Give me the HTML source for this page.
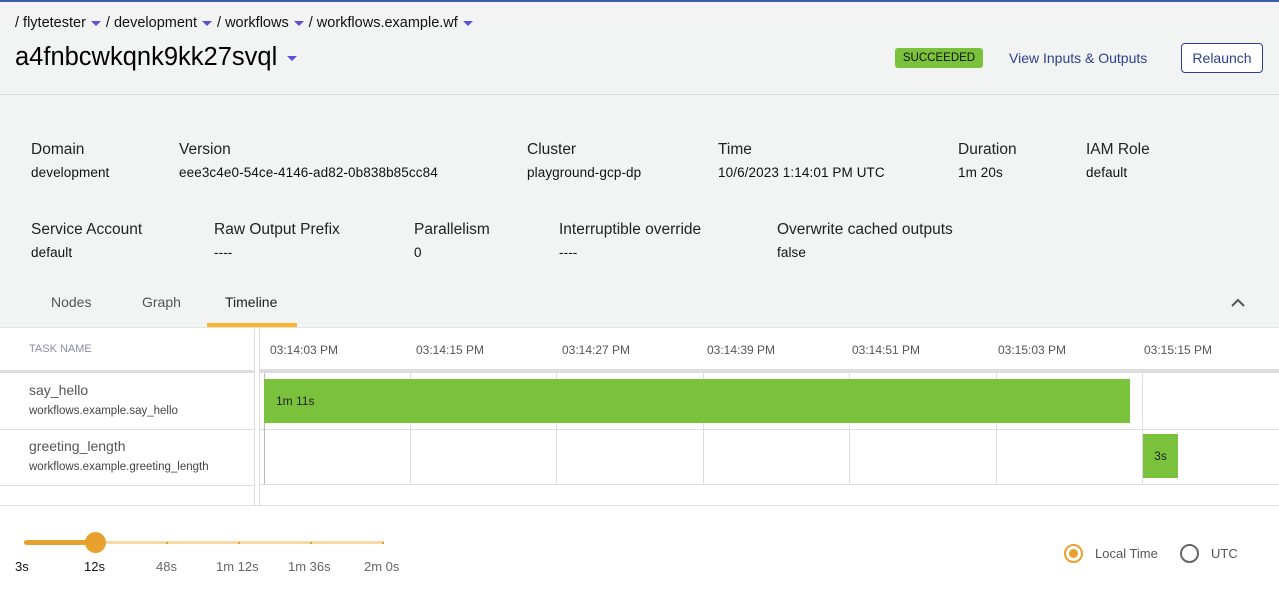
<!DOCTYPE html>
<html><head><meta charset="utf-8"><style>
*{margin:0;padding:0;box-sizing:border-box}
body{width:1279px;height:599px;overflow:hidden;background:#fff;font-family:"Liberation Sans",sans-serif;position:relative;color:#000}
.a{position:absolute;white-space:nowrap}
.tri{display:inline-block;width:0;height:0;border-left:5px solid transparent;border-right:5px solid transparent;border-top:5px solid #5a4fd8;vertical-align:middle;margin:0 5px 0 5px}
.lab{font-size:15.5px;color:#222}
.val{font-size:13.5px;color:#111;letter-spacing:.1px}
.tick{font-size:12px;color:#555}
.vl{position:absolute;width:1px;background:#ddd}
.hl{position:absolute;height:1px;background:#ddd}
</style></head><body>
<div class="a" style="left:0;top:0;width:1279px;height:327px;background:#f2f3f3"></div>
<div class="a" style="left:0;top:0;width:1279px;height:2px;background:#3a5fa6"></div>
<div class="hl" style="left:0;top:94px;width:1279px;background:#dcdcdc"></div>

<div class="a" style="left:15px;top:15px;font-size:14.5px;color:#111">/ flytetester<span class="tri"></span>/ development<span class="tri"></span>/ workflows<span class="tri"></span>/ workflows.example.wf<span class="tri"></span></div>
<div class="a" style="left:15px;top:43px;font-size:25.5px;color:#000">a4fnbcwkqnk9kk27svql<span class="tri" style="margin-left:10px"></span></div>

<div class="a" style="left:895px;top:48px;width:88px;height:20px;background:#7ac23b;border-radius:3px;font-size:11.5px;line-height:20px;text-align:center;color:#111">SUCCEEDED</div>
<div class="a" style="left:1009px;top:50px;font-size:14px;color:#2f3f8f">View Inputs &amp; Outputs</div>
<div class="a" style="left:1181px;top:43px;width:82px;height:30px;border:1px solid #2f3f8f;border-radius:4px;background:#fff;font-size:14px;line-height:28px;text-align:center;color:#2f3f8f">Relaunch</div>

<div class="a lab" style="left:31px;top:141px">Domain</div><div class="a val" style="left:31px;top:165px">development</div>
<div class="a lab" style="left:179px;top:141px">Version</div><div class="a val" style="left:179px;top:165px">eee3c4e0-54ce-4146-ad82-0b838b85cc84</div>
<div class="a lab" style="left:527px;top:141px">Cluster</div><div class="a val" style="left:527px;top:165px">playground-gcp-dp</div>
<div class="a lab" style="left:718px;top:141px">Time</div><div class="a val" style="left:718px;top:165px">10/6/2023 1:14:01 PM UTC</div>
<div class="a lab" style="left:958px;top:141px">Duration</div><div class="a val" style="left:958px;top:165px">1m 20s</div>
<div class="a lab" style="left:1086px;top:141px">IAM Role</div><div class="a val" style="left:1086px;top:165px">default</div>

<div class="a lab" style="left:31px;top:221px">Service Account</div><div class="a val" style="left:31px;top:245px">default</div>
<div class="a lab" style="left:214px;top:221px">Raw Output Prefix</div><div class="a val" style="left:214px;top:245px">----</div>
<div class="a lab" style="left:414px;top:221px">Parallelism</div><div class="a val" style="left:414px;top:245px">0</div>
<div class="a lab" style="left:559px;top:221px">Interruptible override</div><div class="a val" style="left:559px;top:245px">----</div>
<div class="a lab" style="left:777px;top:221px">Overwrite cached outputs</div><div class="a val" style="left:777px;top:245px">false</div>

<div class="a" style="left:51px;top:294px;font-size:14px;color:#555">Nodes</div>
<div class="a" style="left:142px;top:294px;font-size:14px;color:#555">Graph</div>
<div class="a" style="left:225px;top:294px;font-size:14px;color:#222">Timeline</div>
<div class="a" style="left:207px;top:323px;width:90px;height:4px;background:#fbb72b"></div>
<svg class="a" style="left:1230px;top:297px" width="16" height="12"><path d="M2 9 L8 3 L14 9" fill="none" stroke="#555" stroke-width="2"/></svg>
<div class="hl" style="left:0;top:327px;width:1279px;background:#e2e2e2"></div>

<div class="vl" style="left:254px;top:327px;height:178px"></div>
<div class="vl" style="left:259px;top:327px;height:178px"></div>
<div class="a" style="left:29px;top:343px;font-size:11px;color:#8a8aa8">TASK NAME</div>
<div class="a" style="left:0;top:370px;width:254px;height:3px;background:#ddd"></div>
<div class="a" style="left:260px;top:369px;width:1019px;height:4px;background:#ddd"></div>
<div class="hl" style="left:0;top:429px;width:254px"></div>
<div class="hl" style="left:0;top:485px;width:254px"></div>
<div class="hl" style="left:260px;top:429px;width:1019px"></div>
<div class="hl" style="left:260px;top:484px;width:1019px"></div>
<div class="hl" style="left:0;top:505px;width:1279px"></div>

<div class="a" style="left:29px;top:382px;font-size:14px;color:#555">say_hello</div>
<div class="a" style="left:29px;top:405px;font-size:11.5px;color:#444">workflows.example.say_hello</div>
<div class="a" style="left:29px;top:438px;font-size:14px;color:#555">greeting_length</div>
<div class="a" style="left:29px;top:461px;font-size:11.5px;color:#444">workflows.example.greeting_length</div>

<div class="vl" style="left:264px;top:373px;height:111px;background:#bbb"></div>
<div class="vl" style="left:410px;top:373px;height:111px"></div>
<div class="vl" style="left:556px;top:373px;height:111px"></div>
<div class="vl" style="left:703px;top:373px;height:111px"></div>
<div class="vl" style="left:849px;top:373px;height:111px"></div>
<div class="vl" style="left:996px;top:373px;height:111px"></div>
<div class="vl" style="left:1142px;top:373px;height:111px"></div>

<div class="a tick" style="left:270px;top:343px">03:14:03 PM</div>
<div class="a tick" style="left:416px;top:343px">03:14:15 PM</div>
<div class="a tick" style="left:562px;top:343px">03:14:27 PM</div>
<div class="a tick" style="left:707px;top:343px">03:14:39 PM</div>
<div class="a tick" style="left:852px;top:343px">03:14:51 PM</div>
<div class="a tick" style="left:998px;top:343px">03:15:03 PM</div>
<div class="a tick" style="left:1144px;top:343px">03:15:15 PM</div>

<div class="a" style="left:264px;top:379px;width:866px;height:44px;background:#7ac23b;font-size:12px;line-height:44px;padding-left:12px;color:#222">1m 11s</div>
<div class="a" style="left:1143px;top:434px;width:35px;height:44px;background:#7ac23b;font-size:12px;line-height:44px;text-align:center;color:#222">3s</div>

<div class="a" style="left:24px;top:541px;width:360px;height:3px;background:#f7d9a6;border-radius:2px"></div>
<div class="a" style="left:24px;top:540px;width:72px;height:5px;background:#e8a12c;border-radius:3px"></div>
<div class="a" style="left:85px;top:532px;width:21px;height:21px;border-radius:50%;background:#e8a12c"></div>
<div class="a" style="left:166px;top:542px;width:2px;height:2px;background:#e8a12c"></div>
<div class="a" style="left:238px;top:542px;width:2px;height:2px;background:#e8a12c"></div>
<div class="a" style="left:310px;top:542px;width:2px;height:2px;background:#e8a12c"></div>
<div class="a" style="left:382px;top:542px;width:2px;height:2px;background:#e8a12c"></div>
<div class="a" style="left:15px;top:559px;font-size:13px;color:#111">3s</div>
<div class="a" style="left:84px;top:559px;font-size:13px;color:#111">12s</div>
<div class="a" style="left:156px;top:559px;font-size:13px;color:#666">48s</div>
<div class="a" style="left:216px;top:559px;font-size:13px;color:#666">1m 12s</div>
<div class="a" style="left:288px;top:559px;font-size:13px;color:#666">1m 36s</div>
<div class="a" style="left:364px;top:559px;font-size:13px;color:#666">2m 0s</div>

<div class="a" style="left:1064px;top:544px;width:19px;height:19px;border-radius:50%;border:2px solid #e8a12c"></div>
<div class="a" style="left:1069px;top:549px;width:9px;height:9px;border-radius:50%;background:#e8a12c"></div>
<div class="a" style="left:1095px;top:546px;font-size:13px;color:#555">Local Time</div>
<div class="a" style="left:1180px;top:544px;width:19px;height:19px;border-radius:50%;border:2px solid #666"></div>
<div class="a" style="left:1211px;top:546px;font-size:13px;color:#555">UTC</div>
</body></html>
